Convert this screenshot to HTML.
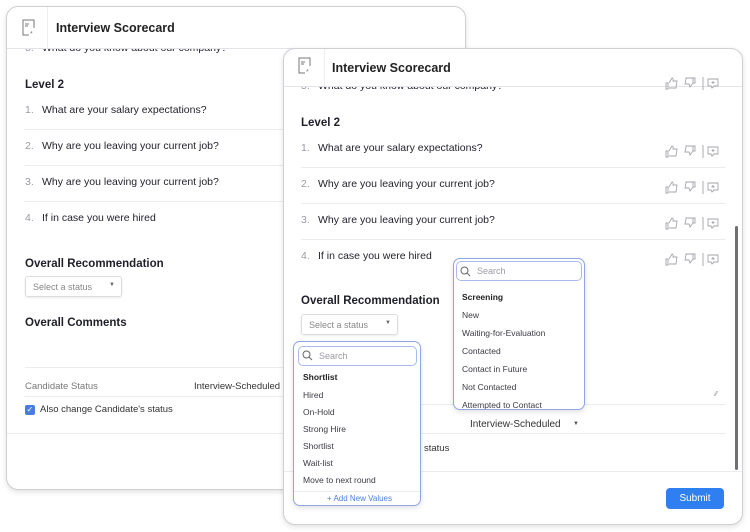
<!DOCTYPE html><html><head><style>
*{margin:0;padding:0;box-sizing:border-box}
body{width:750px;height:532px;background:#fff;position:relative;overflow:hidden;font-family:"Liberation Sans",sans-serif;color:#1f1f2a}
.a{position:absolute;white-space:nowrap}
.card{position:absolute;background:#fff;border:1px solid #cfcfd4;border-radius:12px;box-shadow:0 2px 6px rgba(0,0,0,.12);overflow:hidden}
.t{font-size:10.5px}
.n{color:#9a9aa3;display:inline-block;width:17px}
.h{font-weight:bold;font-size:11.5px}
.ln{position:absolute;height:1px;background:#ececef}
.dd{position:absolute;background:#fff;border:1.5px solid #8ea6e6;border-radius:7px;box-shadow:0 2px 6px rgba(0,0,0,.12);overflow:hidden}
.srch{position:absolute;border:1.5px solid #a9bbee;border-radius:5px;height:20px;font-size:9px;color:#9a9aa3;padding:4px 0 0 20px}
.di{position:absolute;font-size:8.5px;color:#3a3a44;white-space:nowrap}
</style></head><body>

<div class="card" style="left:6px;top:6px;width:460px;height:484px">
 <svg class="a" style="left:14px;top:12px" width="16" height="18" viewBox="0 0 16 18"><path d="M11 1H2v15h6M11 1h2v8" fill="none" stroke="#777" stroke-width="1"/><path d="M4 5h4M4 7h3" stroke="#777"/><text x="9" y="17" font-size="7" fill="#777">*</text></svg>
 <div class="a" style="left:40px;top:0;width:1px;height:41px;background:#eee"></div>
 <div class="a" style="left:49px;top:14px;font-size:12.5px;font-weight:bold;color:#222">Interview Scorecard</div>
 <div class="ln" style="left:0;top:41px;width:460px;background:#e4e4e8"></div>
 <div class="a t" style="left:18px;top:35px;clip-path:inset(7px 0 0 0)"><span class="n">5.</span>What do you know about our company?</div>
 <div class="a h" style="left:18px;top:72px">Level 2</div>
 <div class="a t" style="left:18px;top:97px"><span class="n">1.</span>What are your salary expectations?</div>
 <div class="ln" style="left:18px;top:122px;width:440px"></div>
 <div class="a t" style="left:18px;top:133px"><span class="n">2.</span>Why are you leaving your current job?</div>
 <div class="ln" style="left:18px;top:158px;width:440px"></div>
 <div class="a t" style="left:18px;top:169px"><span class="n">3.</span>Why are you leaving your current job?</div>
 <div class="ln" style="left:18px;top:194px;width:440px"></div>
 <div class="a t" style="left:18px;top:205px"><span class="n">4.</span>If in case you were hired</div>
 <div class="a h" style="left:18px;top:251px">Overall Recommendation</div>
 <div class="a" style="left:18px;top:269px;width:97px;height:21px;border:1px solid #dcdce0;border-radius:3px;box-shadow:0 1px 2px rgba(0,0,0,.08);font-size:9px;color:#888;padding:5px 0 0 7px">Select a status<span style="position:absolute;left:83px;top:5px;font-size:6px;color:#666">▼</span></div>
 <div class="a h" style="left:18px;top:310px">Overall Comments</div>
 <div class="ln" style="left:18px;top:360px;width:440px"></div>
 <div class="a" style="left:18px;top:374px;font-size:9.5px;color:#777">Candidate Status</div>
 <div class="a" style="left:187px;top:374px;font-size:9.5px;color:#333">Interview-Scheduled</div>
 <div class="ln" style="left:18px;top:389px;width:440px"></div>
 <div class="a" style="left:18px;top:398px;width:10px;height:10px;background:#4a7ede;border-radius:2px;color:#fff;font-size:8px;line-height:10px;text-align:center">✓</div>
 <div class="a" style="left:33px;top:397px;font-size:9.5px;color:#333">Also change Candidate's status</div>
 <div class="ln" style="left:0;top:426px;width:460px"></div>
</div>

<div class="card" style="left:283px;top:48px;width:460px;height:477px">
 <svg class="a" style="left:13px;top:8px" width="16" height="18" viewBox="0 0 16 18"><path d="M11 1H2v15h6M11 1h2v8" fill="none" stroke="#777" stroke-width="1"/><path d="M4 5h4M4 7h3" stroke="#777"/><text x="9" y="17" font-size="7" fill="#777">*</text></svg>
 <div class="a" style="left:40px;top:0;width:1px;height:37px;background:#eee"></div>
 <div class="a" style="left:48px;top:12px;font-size:12.5px;font-weight:bold;color:#222">Interview Scorecard</div>
 <div class="ln" style="left:0;top:37px;width:460px;background:#e4e4e8"></div>
 <div class="a t" style="left:17px;top:31px;clip-path:inset(7px 0 0 0)"><span class="n">5.</span>What do you know about our company?</div>
 <div class="a h" style="left:17px;top:68px">Level 2</div>
 <div class="a t" style="left:17px;top:93px"><span class="n">1.</span>What are your salary expectations?</div>
 <div class="ln" style="left:17px;top:118px;width:425px"></div>
 <div class="a t" style="left:17px;top:129px"><span class="n">2.</span>Why are you leaving your current job?</div>
 <div class="ln" style="left:17px;top:154px;width:425px"></div>
 <div class="a t" style="left:17px;top:165px"><span class="n">3.</span>Why are you leaving your current job?</div>
 <div class="ln" style="left:17px;top:190px;width:425px"></div>
 <div class="a t" style="left:17px;top:201px"><span class="n">4.</span>If in case you were hired</div>
 <div class="a h" style="left:17px;top:246px">Overall Recommendation</div>
 <div class="a" style="left:17px;top:265px;width:97px;height:21px;border:1px solid #dcdce0;border-radius:3px;box-shadow:0 1px 2px rgba(0,0,0,.08);font-size:9px;color:#888;padding:5px 0 0 7px">Select a status<span style="position:absolute;left:83px;top:5px;font-size:6px;color:#666">▼</span></div>
 <div class="a" style="left:431px;top:342px;font-size:7px;color:#888">⁄⁄</div>
 <div class="ln" style="left:17px;top:355px;width:425px"></div>
 <div class="a" style="left:186px;top:370px;font-size:10px;color:#333">Interview-Scheduled</div>
 <div class="a" style="left:289px;top:372px;font-size:6px;color:#555">▼</div>
 <div class="ln" style="left:17px;top:384px;width:425px"></div>
 <div class="a" style="left:140px;top:394px;font-size:9.5px;color:#333">status</div>
 <div class="ln" style="left:0;top:422px;width:460px"></div>
 <div class="a" style="left:382px;top:439px;width:58px;height:21px;background:#2f7ff0;border-radius:4px;color:#fff;font-size:10px;text-align:center;line-height:21px">Submit</div>
 <div class="a" style="left:451px;top:177px;width:3px;height:244px;background:#6f6f74;border-radius:2px"></div>
</div>

<svg class="a" style="left:664px;top:77px" width="60" height="190" viewBox="0 0 60 190">
  <g id="r" fill="none" stroke="#a5a5ab" stroke-width="0.9">
   <path d="M2 6h2v6H2zM5 6l3-5c1 0 1.5 1 1 3h4l-1 7H5"/>
   <path d="M22 1h7v5l-3 4-1-3h-4l1-5zM29 1h2v5h-2"/>
   <path d="M39 0v13"/>
   <path d="M44 2h10v7h-4l-2 2-1-2h-3z M49 4v3M47.5 5.5h3"/>
  </g>
  <use href="#r" y="68"/><use href="#r" y="104"/><use href="#r" y="140"/><use href="#r" y="176"/>
</svg>

<div class="dd" style="left:293px;top:341px;width:128px;height:165px">
 <div class="srch" style="left:4px;top:4px;width:119px">Search</div>
 <svg class="a" style="left:8px;top:8px" width="11" height="11"><circle cx="4.5" cy="4.5" r="3.5" fill="none" stroke="#666"/><path d="M7 7l3 3" stroke="#666"/></svg>
 <div class="di" style="left:9px;top:30px;font-weight:bold;color:#222">Shortlist</div>
 <div class="di" style="left:9px;top:48px">Hired</div>
 <div class="di" style="left:9px;top:65px">On-Hold</div>
 <div class="di" style="left:9px;top:82px">Strong Hire</div>
 <div class="di" style="left:9px;top:99px">Shortlist</div>
 <div class="di" style="left:9px;top:116px">Wait-list</div>
 <div class="di" style="left:9px;top:133px">Move to next round</div>
 <div class="ln" style="left:0;top:149px;width:128px"></div>
 <div class="di" style="left:33px;top:152px;color:#4a7ede;font-size:8px">+ Add New Values</div>
</div>

<div class="dd" style="left:453px;top:258px;width:132px;height:152px">
 <div class="srch" style="left:2px;top:2px;width:126px">Search</div>
 <svg class="a" style="left:6px;top:7px" width="11" height="11"><circle cx="4.5" cy="4.5" r="3.5" fill="none" stroke="#666"/><path d="M7 7l3 3" stroke="#666"/></svg>
 <div class="di" style="left:8px;top:33px;font-weight:bold;color:#222">Screening</div>
 <div class="di" style="left:8px;top:51px">New</div>
 <div class="di" style="left:8px;top:69px">Waiting-for-Evaluation</div>
 <div class="di" style="left:8px;top:87px">Contacted</div>
 <div class="di" style="left:8px;top:105px">Contact in Future</div>
 <div class="di" style="left:8px;top:123px">Not Contacted</div>
 <div class="di" style="left:8px;top:141px">Attempted to Contact</div>
</div>
</body></html>
